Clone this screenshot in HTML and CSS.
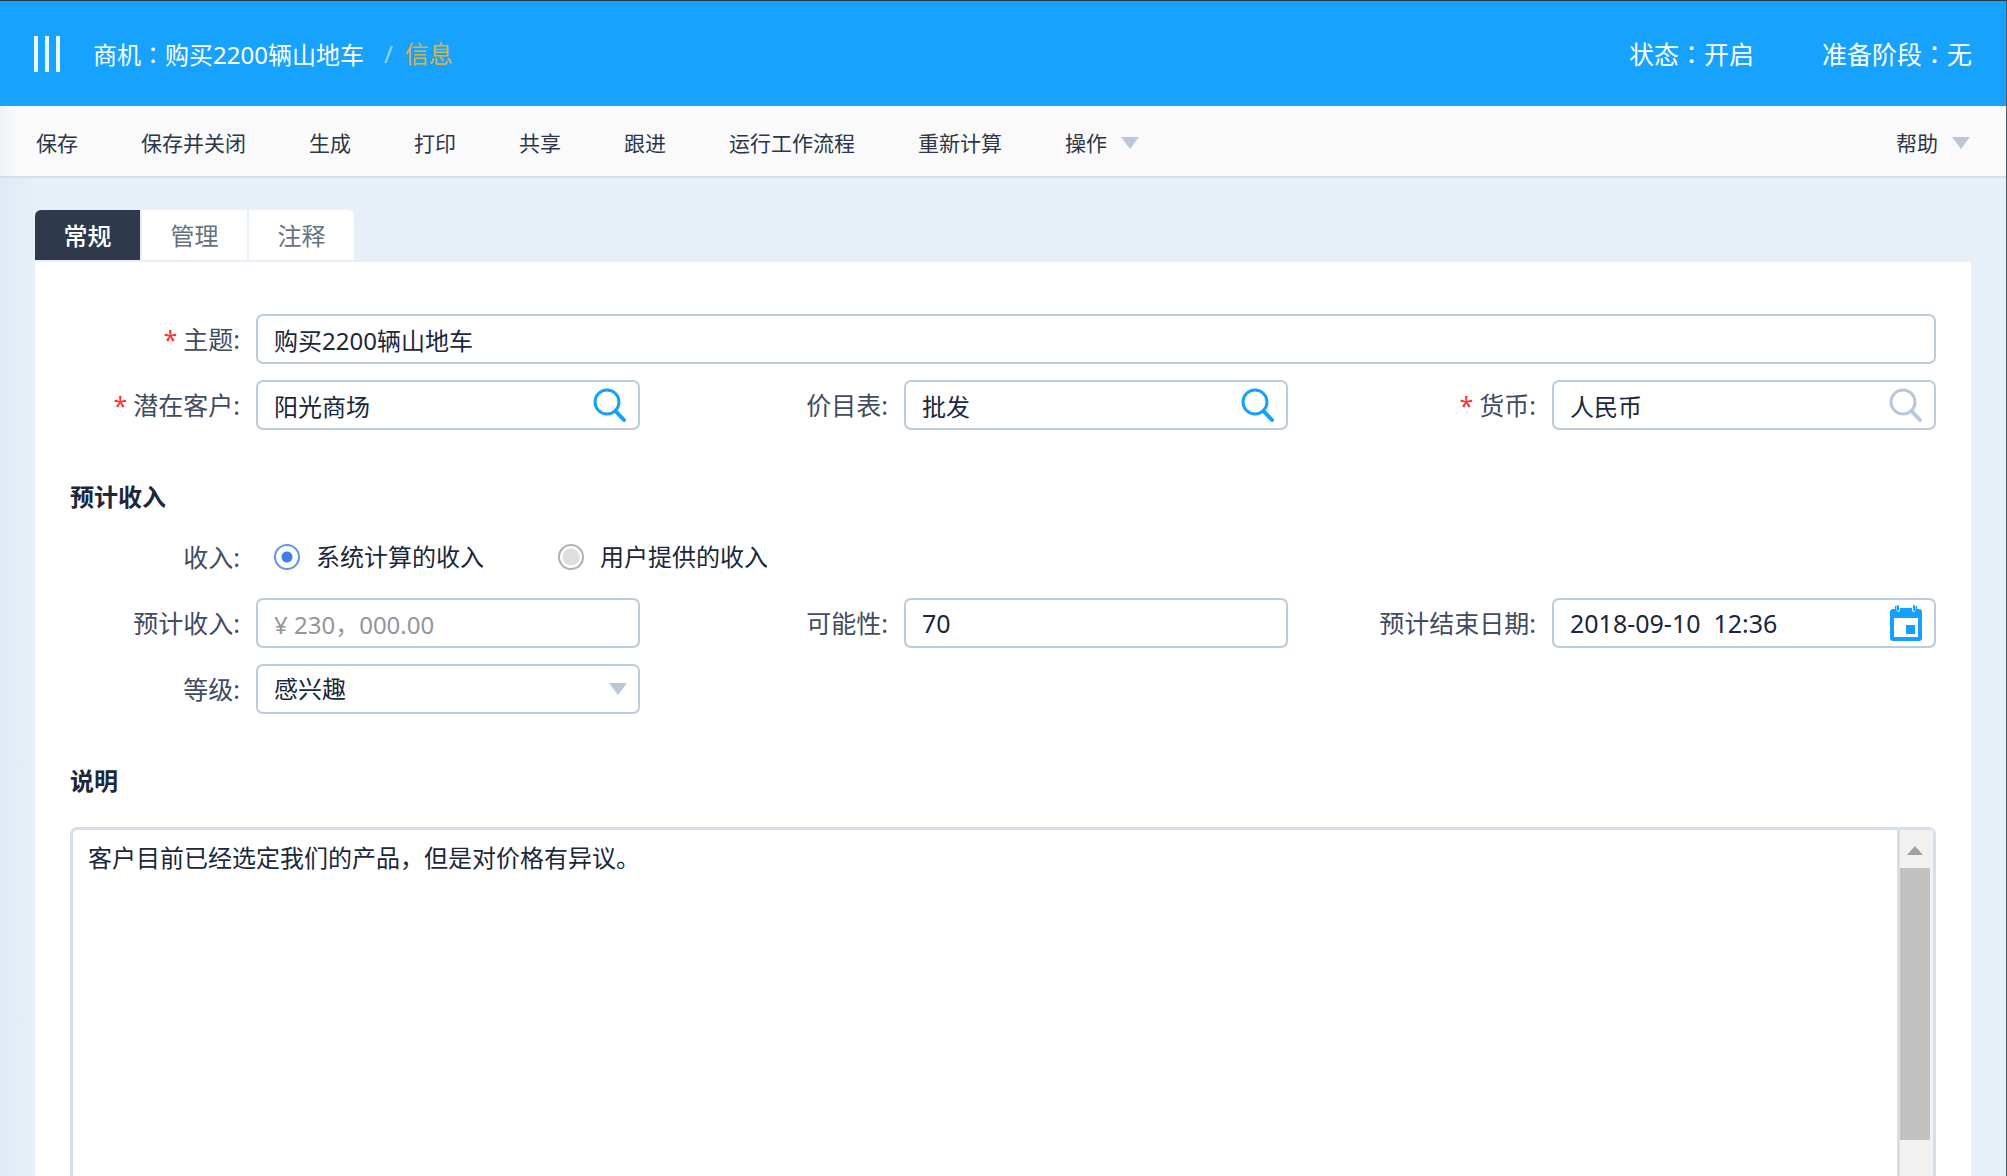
FILE: index.html
```html
<!DOCTYPE html>
<html lang="zh-CN">
<head>
<meta charset="utf-8">
<meta name="viewport" content="width=device-width, initial-scale=1">
<title>商机：购买2200辆山地车</title>
<link rel="stylesheet" href="styles.css">
</head>
<body>
<svg class="sprite" aria-hidden="true">
  <symbol id="search" viewBox="0 0 34 34">
    <circle cx="14" cy="14" r="12" fill="none" stroke="currentColor" stroke-width="3"/>
    <path d="M22.500 23 31 32" fill="none" stroke="currentColor" stroke-width="4" stroke-linecap="round"/>
  </symbol>
  <symbol id="calendar" viewBox="0 0 34 36">
    <path fill="currentColor" fill-rule="evenodd" d="M4 4H6V1H7.500V4C7.500 8 11 8 11 4V3H23V4C23 8 26.500 8 26.500 4V1H28V4H30Q33 4 33 7V33Q33 36 30 36H4Q1 36 1 33V7Q1 4 4 4ZM5 13V32H29V13ZM17 20H26V29H17Z"/>
    <path d="M9 1V5M25 1V5" stroke="currentColor" stroke-width="2" stroke-linecap="round"/>
  </symbol>
</svg>
<div class="page">
  <header class="header">
    <button class="menu" type="button" aria-label="菜单"><i></i><i></i><i></i></button>
    <h1 class="crumbs"><span>商机<span class="colon" lang="zh-Hant">：</span>购买2200辆山地车</span><span class="slash">/</span><span class="current">信息</span></h1>
    <div class="status"><span>状态<span class="colon" lang="zh-Hant">：</span>开启</span><span>准备阶段<span class="colon" lang="zh-Hant">：</span>无</span></div>
  </header>
  <nav class="toolbar">
    <button type="button">保存</button>
    <button type="button">保存并关闭</button>
    <button type="button">生成</button>
    <button type="button">打印</button>
    <button type="button">共享</button>
    <button type="button">跟进</button>
    <button type="button">运行工作流程</button>
    <button type="button">重新计算</button>
    <button type="button">操作<span class="caret"></span></button>
    <button type="button" class="help">帮助<span class="caret"></span></button>
  </nav>
  <main class="main">
    <div class="tabs" role="tablist">
      <button type="button" class="tab active" role="tab" aria-selected="true">常规</button>
      <button type="button" class="tab" role="tab">管理</button>
      <button type="button" class="tab" role="tab">注释</button>
    </div>
    <form class="panel">
      <div class="grid">
        <div class="field wide">
          <label for="topic"><span class="req">*</span>主题:</label>
          <div class="control"><input id="topic" type="text" value="购买2200辆山地车"></div>
        </div>
        <div class="field">
          <label for="customer"><span class="req">*</span>潜在客户:</label>
          <div class="control"><input id="customer" type="text" value="阳光商场"><button class="icon" type="button" aria-label="查找"><svg><use href="#search"/></svg></button></div>
        </div>
        <div class="field">
          <label for="prices">价目表:</label>
          <div class="control"><input id="prices" type="text" value="批发"><button class="icon" type="button" aria-label="查找"><svg><use href="#search"/></svg></button></div>
        </div>
        <div class="field">
          <label for="currency"><span class="req">*</span>货币:</label>
          <div class="control"><input id="currency" type="text" value="人民币"><button class="icon muted" type="button" aria-label="查找"><svg><use href="#search"/></svg></button></div>
        </div>
      </div>

      <h2 class="section">预计收入</h2>
      <div class="grid">
        <div class="field wide" role="radiogroup" aria-labelledby="income">
          <span class="label" id="income">收入:</span>
          <div class="radios">
            <label><input type="radio" name="income" checked>系统计算的收入</label>
            <label><input type="radio" name="income">用户提供的收入</label>
          </div>
        </div>
        <div class="field">
          <label for="amount">预计收入:</label>
          <div class="control"><input id="amount" class="readonly" type="text" value="¥ 230，000.00" readonly></div>
        </div>
        <div class="field">
          <label for="chance">可能性:</label>
          <div class="control"><input id="chance" class="numeric" type="text" value="70"></div>
        </div>
        <div class="field">
          <label for="closing">预计结束日期:</label>
          <div class="control"><input id="closing" class="numeric" type="text" value="2018-09-10  12:36"><button class="icon" type="button" aria-label="选择日期"><svg><use href="#calendar"/></svg></button></div>
        </div>
        <div class="field">
          <label for="grade">等级:</label>
          <div class="control"><select id="grade"><option>感兴趣</option></select><span class="caret"></span></div>
        </div>
      </div>

      <h2 class="section note-title" id="note-title">说明</h2>
      <div class="note">
        <textarea aria-labelledby="note-title">客户目前已经选定我们的产品，但是对价格有异议。</textarea>
        <div class="scrollbar"><span class="up"></span><span class="thumb"></span></div>
      </div>
    </form>
  </main>
</div>
</body>
</html>
```
FILE: styles.css
```css
* { box-sizing: border-box; }

body {
  margin: 0;
  font: 24px/32px "Noto Sans", "Noto Sans CJK SC", sans-serif;
  color: #1b273a;
}

button, input, select, textarea { font: inherit; color: inherit; }

button {
  padding: 0;
  border: 0;
  background: none;
  white-space: nowrap;
}

.sprite { display: none; }

.page {
  display: flex;
  flex-direction: column;
  height: 100vh;
  overflow: hidden;
  border-top: 1px solid #27384a;
  border-right: 1px solid #4c5a68;
  background: linear-gradient(90deg, #e0eaf4, #e7eff9 32px);
}

.header {
  display: flex;
  flex: none;
  align-items: center;
  height: 105px;
  padding: 0 34px;
  background: #17a2fd;
  color: #fff;
}

.menu {
  display: flex;
  gap: 7px;
  margin-right: 33px;
}

.menu i {
  width: 4px;
  height: 36px;
  background: #e9f6ff;
}

.crumbs {
  display: flex;
  margin: 0;
  padding-top: 2px;
  font-size: 24px;
  font-weight: 400;
}

.slash { margin: 0 12px 0 20px; color: #9bd6ff; }
.current { color: #dcb13c; }
.colon { font-family: "Noto Sans CJK TC", sans-serif; }

.status {
  display: flex;
  gap: 68px;
  margin-left: auto;
  font-size: 25px;
}

.toolbar {
  display: flex;
  flex: none;
  gap: 63px;
  height: 72px;
  padding: 4px 36px 0;
  border-bottom: 2px solid #d6dee7;
  background: linear-gradient(90deg, #f0f3f6, #fafafa 20px);
  font-size: 21px;
  color: #2b3749;
}

.toolbar button {
  display: flex;
  align-items: center;
  gap: 14px;
}

.toolbar .help { margin-left: auto; }

.caret {
  flex: none;
  border: 9px solid transparent;
  border-top: 12px solid #b9c8d9;
  border-bottom: 0;
}

.main {
  display: flex;
  flex: 1;
  flex-direction: column;
  min-height: 0;
  padding: 32px 35px 0;
}

.tabs {
  display: flex;
  flex: none;
  gap: 2px;
  margin-bottom: 2px;
}

.tab {
  width: 105px;
  height: 50px;
  padding-top: 2px;
  background: #fff;
  color: #667180;
}

.tab:first-child { border-top-left-radius: 6px; }
.tab:last-child { border-top-right-radius: 6px; }
.tab.active { background: #2e394b; color: #fff; font-weight: 500; }

.panel {
  display: flex;
  flex: 1;
  flex-direction: column;
  min-height: 0;
  padding: 52px 35px 0;
  background: #fff;
}

.grid {
  display: grid;
  grid-template-columns: repeat(3, minmax(0, 1fr));
  gap: 16px 78px;
}

.field {
  display: flex;
  align-items: center;
  gap: 16px;
  min-width: 0;
  height: 50px;
}

.wide { grid-column: 1 / -1; }

.field > label, .label {
  flex: none;
  width: 170px;
  font-size: 25px;
  text-align: right;
  white-space: nowrap;
  color: #3f4c61;
}

.req { margin-right: 6px; color: #ff3030; }

.control {
  display: flex;
  flex: 1;
  align-items: center;
  min-width: 0;
  height: 50px;
  padding-right: 11px;
  border: 2px solid #bccad9;
  border-radius: 7px;
}

.control input, .control select {
  flex: 1;
  width: 100%;
  min-width: 0;
  height: 46px;
  padding: 0 0 0 16px;
  border: 0;
  outline: 0;
  background: none;
  appearance: none;
}

.control .numeric { font-size: 25px; white-space: pre; }
.control .readonly { color: #929699; }

.icon {
  display: flex;
  flex: none;
  color: #13a0ff;
}

.icon svg { width: 34px; height: 36px; }
.icon.muted { color: #b9c8d9; }

.radios {
  display: flex;
  gap: 74px;
  padding-left: 18px;
}

.radios label {
  display: flex;
  align-items: center;
  gap: 16px;
}

.radios input {
  width: 26px;
  height: 26px;
  margin: 0;
  border: 2px solid #aeb0b2;
  border-radius: 50%;
  background: radial-gradient(circle, #dedede 8px, #fff 9px);
  appearance: none;
}

.radios input:checked {
  border-color: #6295ec;
  background: radial-gradient(circle, #3d7fe5 5px, #fff 6px);
}

.section {
  flex: none;
  margin: 51px 0 19px;
  font-size: 24px;
  font-weight: 700;
}

.note-title { margin-bottom: 30px; }

.note {
  display: flex;
  flex: 1;
  min-height: 0;
  border: 3px solid #d5dfe9;
  border-bottom: 0;
  border-radius: 7px 7px 0 0;
}

.note textarea {
  flex: 1;
  padding: 12px 15px;
  border: 0;
  outline: 0;
  background: none;
  resize: none;
}

.scrollbar {
  display: flex;
  flex-direction: column;
  align-items: center;
  width: 36px;
  padding-right: 3px;
  border-left: 3px solid #d5dfe9;
  background: #f1f1f1;
}

.up {
  margin: 16px 0 13px;
  border: 8px solid transparent;
  border-top: 0;
  border-bottom: 9px solid #a0a0a0;
}

.thumb {
  width: 30px;
  height: 272px;
  background: #c1c1c1;
}
```
